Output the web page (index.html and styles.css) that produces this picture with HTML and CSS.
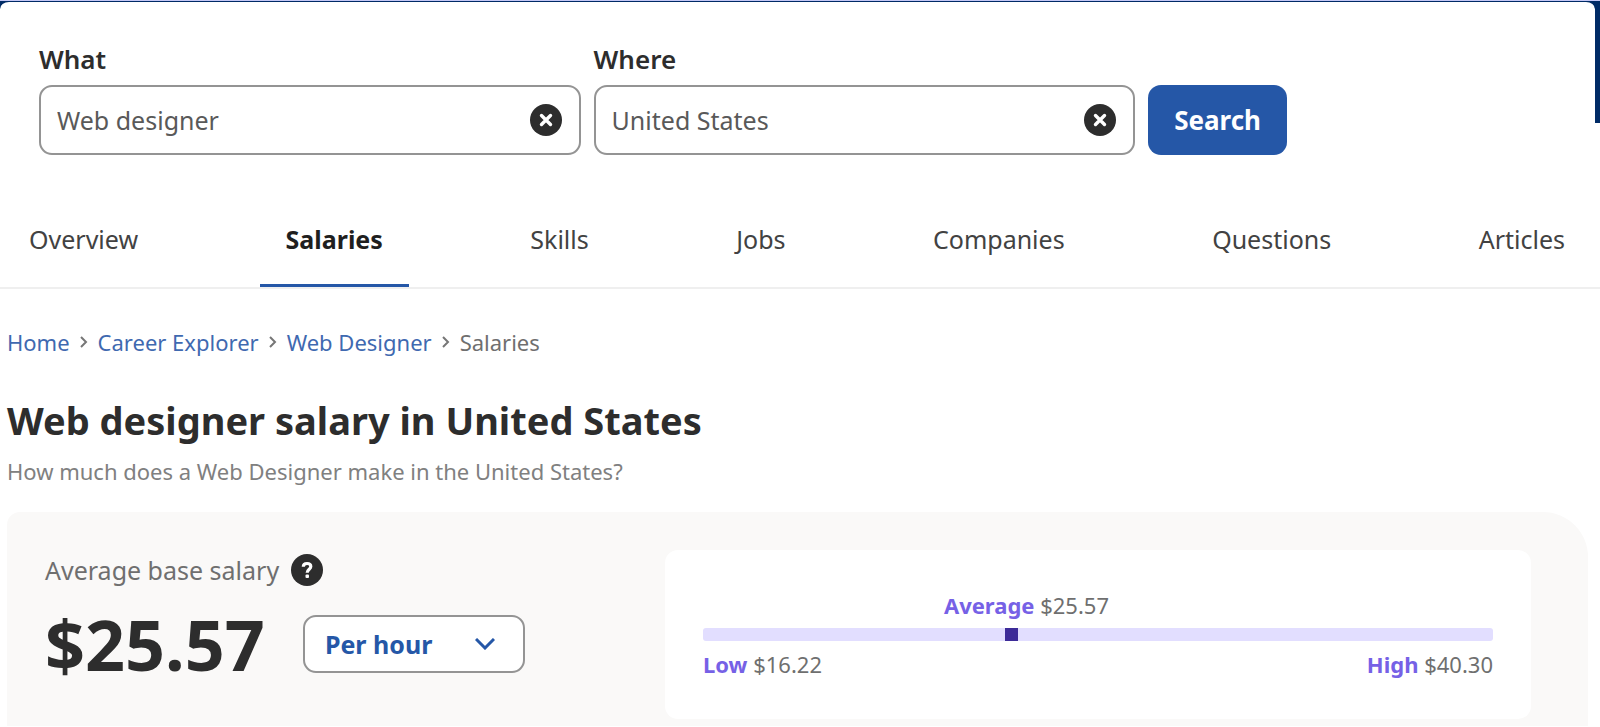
FILE: index.html
```html
<!DOCTYPE html>
<html lang="en">
  <head>
    <meta charset="UTF-8" />
    <meta name="viewport" content="width=device-width, initial-scale=1.0" />
    <title>Web designer salary in United States</title>
    <link rel="stylesheet" href="styles.css">
  </head>
  <body>
    <div class="banner"></div>
    <header class="header">
      <form class="search" onsubmit="return false">
        <div class="field">
          <label for="what">What</label>
          <div class="field-box">
            <input type="text" id="what" value="Web designer" />
            <button type="button" class="icon-button" aria-label="Clear what">
              <svg viewBox="0 0 32 32">
                <circle cx="16" cy="16" r="16" fill="#2d2d2d" />
                <path d="M11.500 11.500L20.500 20.500M20.500 11.500L11.500 20.500" stroke="#fff" stroke-width="3.400" stroke-linecap="round" />
              </svg>
            </button>
          </div>
        </div>
        <div class="field">
          <label for="where">Where</label>
          <div class="field-box">
            <input type="text" id="where" value="United States" />
            <button type="button" class="icon-button" aria-label="Clear where">
              <svg viewBox="0 0 32 32">
                <circle cx="16" cy="16" r="16" fill="#2d2d2d" />
                <path d="M11.500 11.500L20.500 20.500M20.500 11.500L11.500 20.500" stroke="#fff" stroke-width="3.400" stroke-linecap="round" />
              </svg>
            </button>
          </div>
        </div>
        <button type="submit" class="search-button">Search</button>
      </form>
    </header>

    <nav class="tabs">
      <a href="#">Overview</a>
      <a href="#" class="active" aria-current="page">Salaries</a>
      <a href="#">Skills</a>
      <a href="#">Jobs</a>
      <a href="#">Companies</a>
      <a href="#">Questions</a>
      <a href="#">Articles</a>
    </nav>

    <main class="content">
      <nav class="breadcrumbs" aria-label="Breadcrumb">
        <a href="#">Home</a>
        <svg viewBox="0 0 8 14"><path d="M1 2L6 7L1 12" /></svg>
        <a href="#">Career Explorer</a>
        <svg viewBox="0 0 8 14"><path d="M1 2L6 7L1 12" /></svg>
        <a href="#">Web Designer</a>
        <svg viewBox="0 0 8 14"><path d="M1 2L6 7L1 12" /></svg>
        <span>Salaries</span>
      </nav>

      <h1>Web designer salary in United States</h1>
      <p class="subtitle">How much does a Web Designer make in the United States?</p>

      <section class="panel">
        <div class="salary">
          <div class="salary-label">
            <label for="period">Average base salary</label>
            <button type="button" class="icon-button" aria-label="About this salary">
              <svg viewBox="0 0 32 32">
                <circle cx="16" cy="16" r="16" fill="#2d2d2d" />
                <path d="M12.300 12.700C12.300 10.600 13.800 9.500 16 9.500C18.500 9.500 19.800 10.700 19.800 12.500C19.800 15.200 16.200 15.300 16.200 18.800" fill="none" stroke="#fff" stroke-width="3.200" />
                <rect x="14.500" y="20.600" width="3.500" height="3.500" rx="1" fill="#fff" />
              </svg>
            </button>
          </div>
          <div class="salary-row">
            <strong class="amount">$25.57</strong>
            <div class="period">
              <select id="period">
                <option>Per hour</option>
                <option>Per day</option>
                <option>Per week</option>
                <option>Per month</option>
                <option>Per year</option>
              </select>
              <svg viewBox="0 0 20 12"><path d="M1 1L10 10L19 1" /></svg>
            </div>
          </div>
        </div>

        <div class="range">
          <p class="range-average"><b>Average</b> $25.57</p>
          <div class="range-bar">
            <span class="range-marker" style="margin-left: 38.2%"></span>
          </div>
          <div class="range-ends">
            <p><b>Low</b> $16.22</p>
            <p><b>High</b> $40.30</p>
          </div>
        </div>
      </section>
    </main>
  </body>
</html>
```
FILE: styles.css
```css
* {
  box-sizing: border-box;
}

body {
  margin: 0;
  background-color: #fff;
  color: #2d2d2d;
  font-family: "Noto Sans", sans-serif;
  font-size: 26px;
  line-height: 36px;
}

h1,
p {
  margin: 0;
}

a {
  text-decoration: none;
}

input,
select,
button {
  font: inherit;
}

button {
  cursor: pointer;
}

/* Dark strip that shows behind the header corners */
.banner {
  height: 123px;
  margin-bottom: -123px;
  border-top: 1px solid #c3c7f5;
  background-color: #002b66;
}

.header {
  margin-right: 5px;
  padding: 39px 38px 0 39px;
  border-top: 2px solid transparent;
  border-radius: 9px 9px 0 0;
  background-color: #fff;
  background-clip: padding-box;
}

/* Search form */
.search {
  display: flex;
  align-items: flex-end;
  gap: 13px;
  max-width: 1248px;
}

.field {
  flex: 1;
}

.field label {
  display: block;
  margin-bottom: 8px;
  font-weight: 600;
}

.field-box {
  display: flex;
  align-items: center;
  height: 70px;
  padding: 0 17px 0 16px;
  border: 2px solid #949494;
  border-radius: 13px;
}

.field-box input {
  flex: 1;
  min-width: 0;
  padding: 0;
  border: none;
  outline: none;
  color: #595959;
  background: none;
  font-size: 25px;
}

.icon-button {
  display: flex;
  width: 32px;
  height: 32px;
  padding: 0;
  border: none;
  background: none;
}

.search-button {
  height: 70px;
  padding: 0 26px;
  border: none;
  border-radius: 13px;
  background-color: #2557a7;
  color: #fff;
  font-weight: 700;
}

/* Section tabs */
.tabs {
  display: flex;
  justify-content: space-between;
  margin-top: 51px;
  padding: 0 9px 0 3px;
  border-bottom: 2px solid #efefef;
  font-size: 25px;
}

.tabs a {
  padding: 15px 26px 27px;
  border-bottom: 3px solid transparent;
  color: #424242;
}

.tabs .active {
  border-color: #2557a7;
  color: #1f1f1f;
  font-weight: 700;
}

.content {
  padding: 36px 12px 0 7px;
}

.breadcrumbs {
  display: flex;
  align-items: center;
  gap: 10px;
  font-size: 22px;
  line-height: 34px;
}

.breadcrumbs a {
  color: #3f69b0;
}

.breadcrumbs span {
  color: #6f6f6f;
}

.breadcrumbs svg {
  width: 8px;
  height: 14px;
  fill: none;
  stroke: #767676;
  stroke-width: 2;
}

h1 {
  margin-top: 33px;
  font-size: 38px;
  line-height: 56px;
  font-weight: 700;
}

.subtitle {
  margin-top: 6px;
  color: #808080;
  font-size: 22px;
  line-height: 34px;
}

/* Salary panel */
.panel {
  display: grid;
  grid-template-columns: 582px 1fr;
  gap: 38px;
  margin-top: 24px;
  padding: 38px 57px 7px 38px;
  border-radius: 13px 45px 0 0;
  background-color: #faf9f8;
}

.salary {
  padding-top: 2px;
}

.salary-label {
  display: flex;
  align-items: center;
  gap: 12px;
  color: #6f6f6f;
  font-size: 25px;
}

.salary-row {
  display: flex;
  align-items: center;
  gap: 38px;
  margin-top: 11px;
}

.amount {
  font-size: 70px;
  line-height: 90px;
}

.period {
  display: grid;
  align-items: center;
  width: 222px;
}

.period select,
.period svg {
  grid-area: 1 / 1;
}

.period select {
  width: 100%;
  height: 58px;
  padding: 0 20px;
  border: 2px solid #949494;
  border-radius: 13px;
  appearance: none;
  background-color: #fff;
  color: #2557a7;
  font-size: 25px;
  font-weight: 700;
}

.period svg {
  justify-self: end;
  width: 20px;
  height: 12px;
  margin-right: 30px;
  fill: none;
  stroke: #2557a7;
  stroke-width: 3;
  pointer-events: none;
}

/* Low to high range */
.range {
  padding: 38px;
  border-radius: 13px;
  background-color: #fff;
  color: #6f6f6f;
  font-size: 22px;
  line-height: 34px;
}

.range b {
  color: #7661e6;
}

.range-average {
  margin-left: 30.5%;
}

.range-bar {
  display: flex;
  height: 13px;
  margin: 6px 0;
  border-radius: 3px;
  background-color: #e2deff;
}

.range-marker {
  width: 13px;
  background-color: #3d2b98;
}

.range-ends {
  display: flex;
  justify-content: space-between;
}
```
